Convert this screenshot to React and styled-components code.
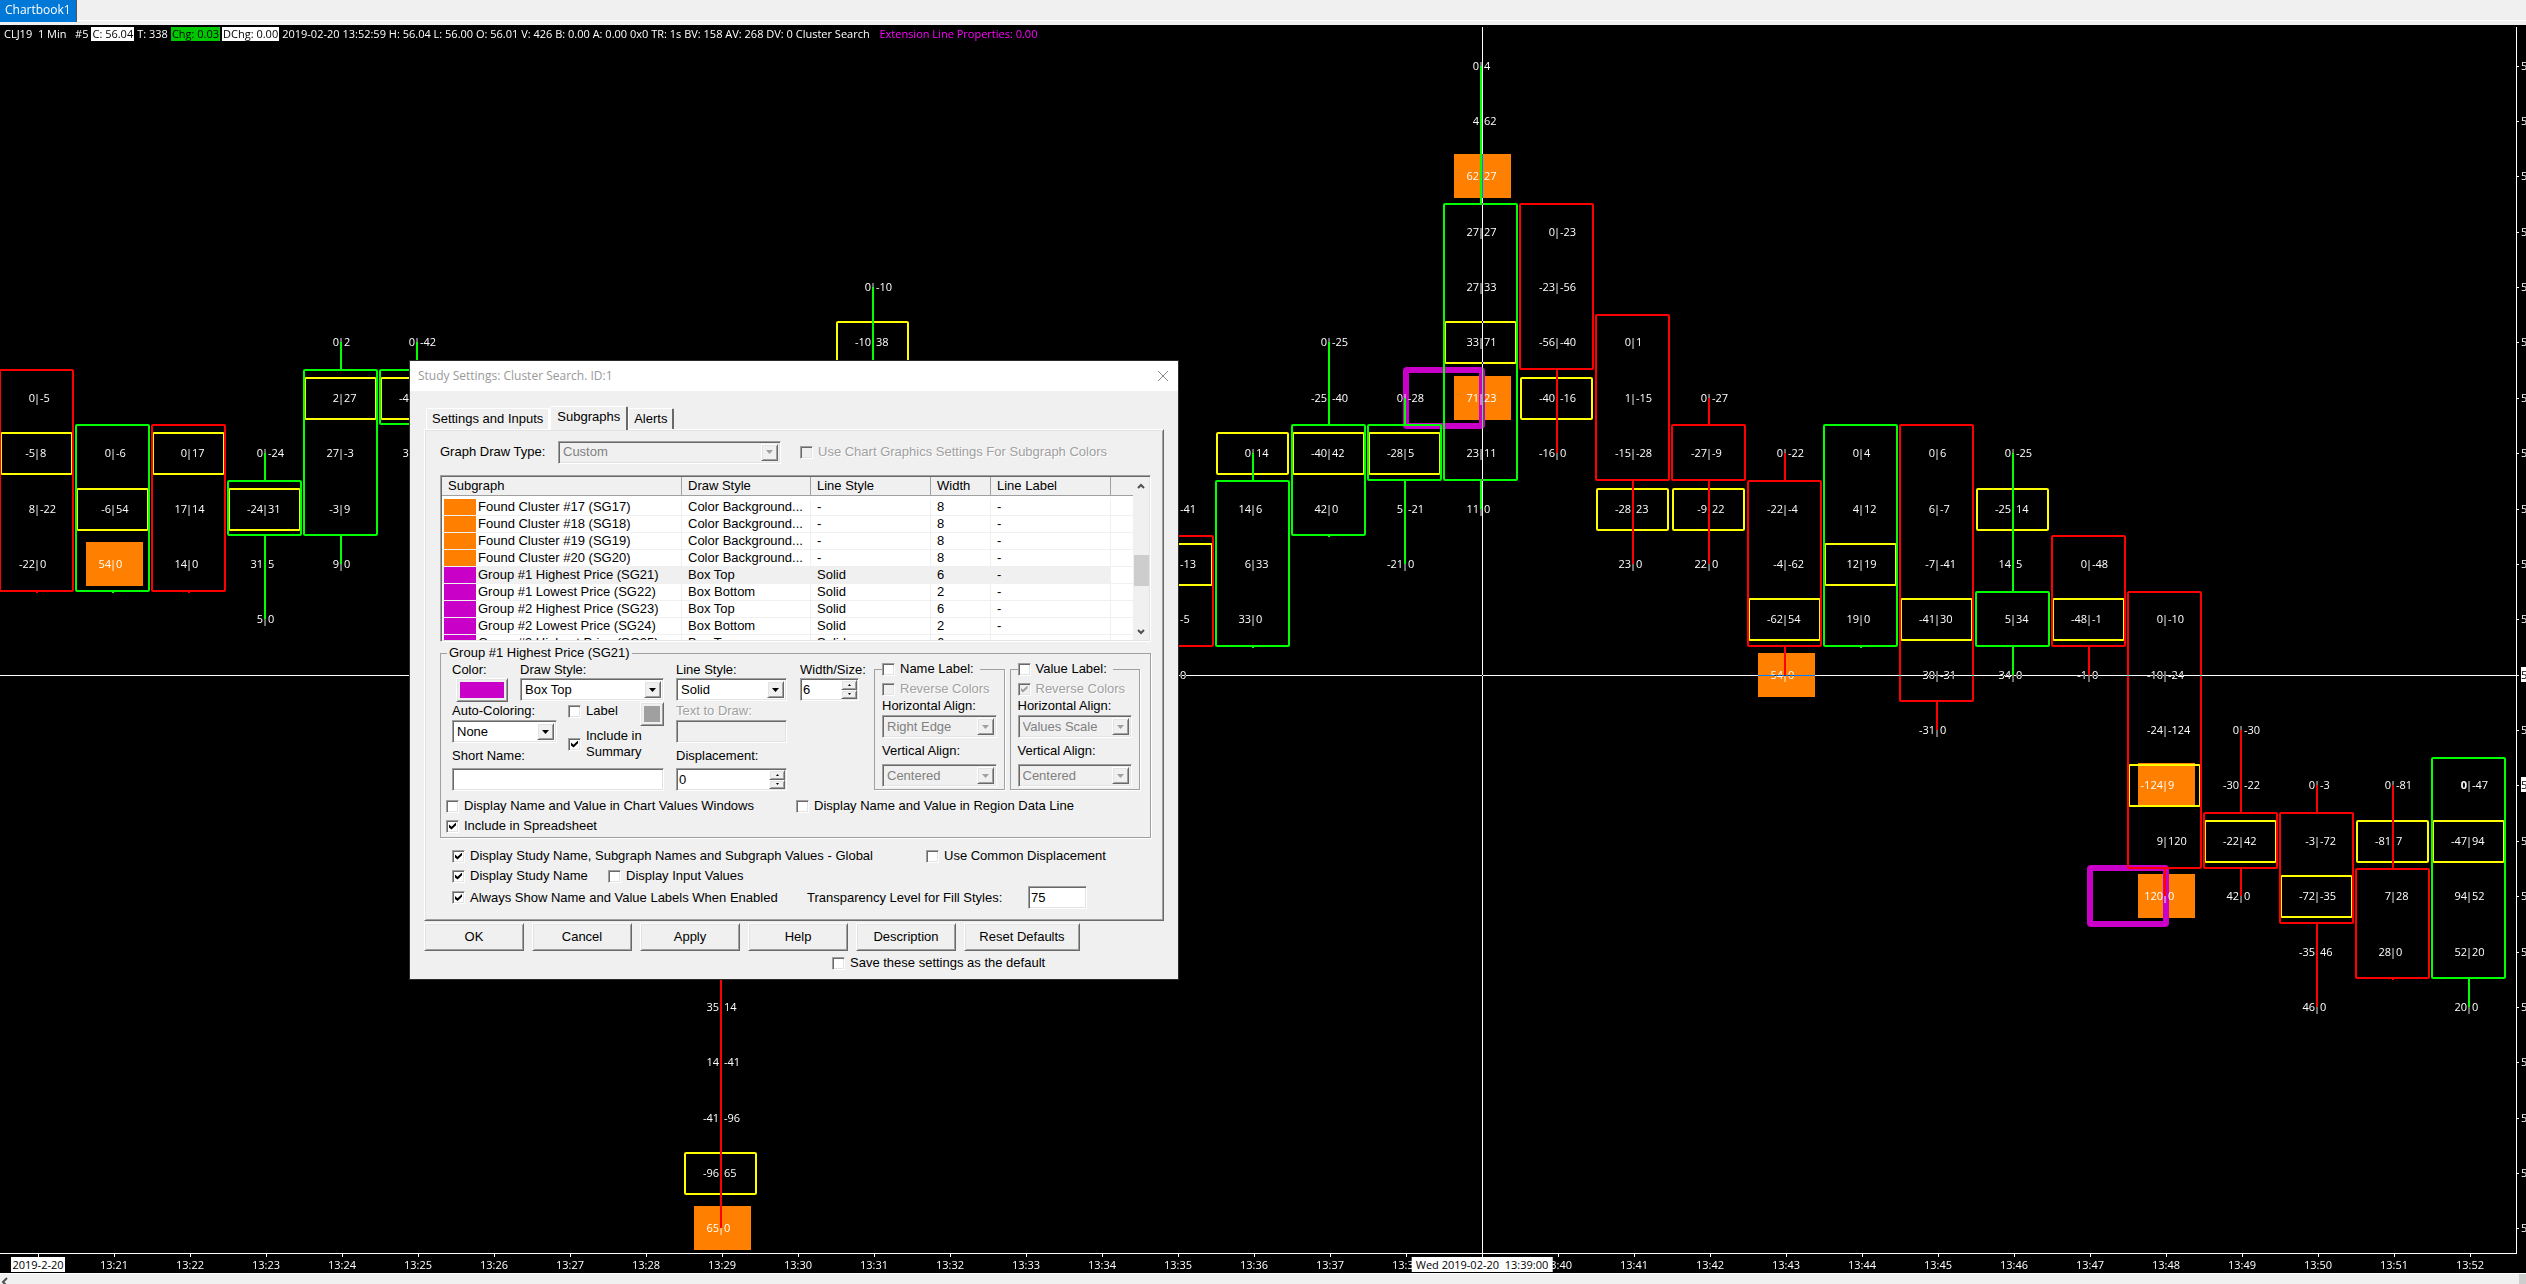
import React, { useState } from 'react';
import styled, { createGlobalStyle, css } from 'styled-components';

const GlobalStyle = createGlobalStyle`
  * {
    box-sizing: border-box;
  }
  body {
    margin: 0;
    background: #000;
  }
`;

const CHART_FONT = '"Open Sans", "Noto Sans", sans-serif';
const DIALOG_FONT = '"Liberation Sans", Arial, sans-serif';

const UP = '#00ff00';
const DOWN = '#ff0000';
const MAGENTA = '#c800c8';
const ORANGE = '#ff8000';

/* ---------- chart data ---------- */

// first = row of the first cell, body = first and last row of the candle body
const BARS = [
  { col: 0, color: DOWN, body: [6, 9], first: 6, cells: ['0|-5', '-5|8', '8|-22', '-22|0'], poc: 7 },
  { col: 1, color: UP, body: [7, 9], first: 7, cells: ['0|-6', '-6|54', '54|0'], poc: 8, clusters: [9] },
  { col: 2, color: DOWN, body: [7, 9], first: 7, cells: ['0|17', '17|14', '14|0'], poc: 7 },
  { col: 3, color: UP, body: [8, 8], first: 7, cells: ['0|-24', '-24|31', '31|5', '5|0'], poc: 8 },
  { col: 4, color: UP, body: [6, 8], first: 5, cells: ['0|2', '2|27', '27|-3', '-3|9', '9|0'], poc: 6 },
  { col: 5, color: UP, body: [6, 6], first: 5, cells: ['0|-42', '-42|30', '30|0'], poc: 6 },
  { col: 9, color: DOWN, body: [14, 15], first: 17, cells: ['35|14', '14|-41', '-41|-96', '-96|65', '65|0'], poc: 20, clusters: [21] },
  { col: 11, color: UP, body: [7, 8], first: 4, cells: ['0|-10', '-10|38'], poc: 5 },
  { col: 15, color: DOWN, body: [9, 10], first: 8, cells: ['0|-41', '-41|-13', '-13|-5', '-5|0'], poc: 9 },
  { col: 16, color: UP, body: [8, 10], first: 7, cells: ['0|14', '14|6', '6|33', '33|0'], poc: 7 },
  { col: 17, color: UP, body: [7, 8], first: 5, cells: ['0|-25', '-25|-40', '-40|42', '42|0'], poc: 7 },
  { col: 18, color: UP, body: [7, 7], first: 6, cells: ['0|-28', '-28|5', '5|-21', '-21|0'], poc: 7 },
  { col: 19, color: UP, body: [3, 7], first: 0, cells: ['0|4', '4|62', '62|27', '27|27', '27|33', '33|71', '71|23', '23|11', '11|0'], poc: 5, clusters: [2, 6] },
  { col: 20, color: DOWN, body: [3, 5], first: 3, cells: ['0|-23', '-23|-56', '-56|-40', '-40|-16', '-16|0'], poc: 6 },
  { col: 21, color: DOWN, body: [5, 7], first: 5, cells: ['0|1', '1|-15', '-15|-28', '-28|23', '23|0'], poc: 8 },
  { col: 22, color: DOWN, body: [7, 7], first: 6, cells: ['0|-27', '-27|-9', '-9|22', '22|0'], poc: 8 },
  { col: 23, color: DOWN, body: [8, 10], first: 7, cells: ['0|-22', '-22|-4', '-4|-62', '-62|54', '54|0'], poc: 10, clusters: [11] },
  { col: 24, color: UP, body: [7, 10], first: 7, cells: ['0|4', '4|12', '12|19', '19|0'], poc: 9 },
  { col: 25, color: DOWN, body: [7, 11], first: 7, cells: ['0|6', '6|-7', '-7|-41', '-41|30', '30|-31', '-31|0'], poc: 10 },
  { col: 26, color: UP, body: [10, 10], first: 7, cells: ['0|-25', '-25|14', '14|5', '5|34', '34|0'], poc: 8 },
  { col: 27, color: DOWN, body: [9, 10], first: 9, cells: ['0|-48', '-48|-1', '-1|0'], poc: 10 },
  { col: 28, color: DOWN, body: [10, 14], first: 10, cells: ['0|-10', '-10|-24', '-24|-124', '-124|9', '9|120', '120|0'], poc: 13, clusters: [13, 15] },
  { col: 29, color: DOWN, body: [14, 14], first: 12, cells: ['0|-30', '-30|-22', '-22|42', '42|0'], poc: 14 },
  { col: 30, color: DOWN, body: [14, 15], first: 13, cells: ['0|-3', '-3|-72', '-72|-35', '-35|46', '46|0'], poc: 15 },
  { col: 31, color: DOWN, body: [15, 16], first: 13, cells: ['0|-81', '-81|7', '7|28', '28|0'], poc: 14 },
  { col: 32, color: UP, body: [13, 16], first: 13, cells: ['0|-47', '-47|94', '94|52', '52|20', '20|0'], poc: 14, live: true },
];

const GROUPS = [
  { col: 19, row: 6 },
  { col: 28, row: 15 },
];

const TIMES = Array.from({ length: 32 }, (_, i) => `13:${21 + i}`);

const COL = 76;
const ROW = 55.38;
const rowY = (row) => Math.floor(21 + ROW * row);
const edgeY = (row) => Math.floor(21 + ROW * (row - 0.5));

/* ---------- page ---------- */

const Page = styled.div`
  display: flex;
  flex-direction: column;
  height: 100vh;
  overflow: hidden;
  position: relative;
  background: #000;
  font-family: ${CHART_FONT};
  font-size: 12px;
`;

const BookBar = styled.nav`
  display: flex;
  align-items: flex-start;
  flex: none;
  height: 25px;
  background: linear-gradient(#f0f0f0 20px, #fff 20px, #fff 21px, #f0f0f0 21px);
`;

const BookTab = styled.a`
  height: 22px;
  padding: 0 5px;
  border-right: 1px solid #555;
  background: #0078d7;
  color: #fff;
  line-height: 20px;
  text-decoration: none;
`;

const ChartArea = styled.main`
  flex: 1;
  min-height: 0;
  display: flex;
`;

const ChartColumn = styled.div`
  flex: 1;
  min-width: 0;
  display: flex;
  flex-direction: column;
`;

const InfoBar = styled.div`
  flex: none;
  display: flex;
  gap: 2px;
  height: 20px;
  padding: 2px 0 0 3px;
  color: #fff;
  font-size: 11px;
  line-height: 14px;
  white-space: pre;
`;

const InfoItem = styled.span`
  height: 14px;
  padding: 0 1px;
  background: ${({ $bg }) => $bg || 'transparent'};
  color: ${({ $color }) => $color || '#fff'};
`;

const Plot = styled.svg`
  display: block;
  flex: 1;
  width: 100%;
  min-height: 0;
  overflow: visible;
  font-family: ${CHART_FONT};
  font-size: 11px;
  fill: #fff;
`;

const Crosshair = styled.line`
  stroke: #fff;
  mix-blend-mode: difference;
`;

const TimeAxis = styled.div`
  flex: none;
  display: flex;
  height: 20px;
  border-top: 1px solid #fff;
  color: #fff;
  font-size: 11px;
`;

const TimeSlot = styled.div`
  flex: none;
  position: relative;
  display: flex;
  flex-direction: column;
  align-items: center;
  width: ${COL}px;
  line-height: 15px;

  &::before {
    content: '';
    width: 1px;
    height: 3px;
    background: #fff;
  }
`;

const DateMark = styled.span`
  padding: 0 1px;
  background: #fff;
  color: #000;
`;

const TimeBadge = styled.span`
  position: absolute;
  z-index: 1;
  top: 3px;
  left: 50%;
  transform: translateX(-50%);
  padding: 0 4px;
  background: #fff;
  color: #000;
  white-space: pre;
`;

const PriceAxis = styled.svg`
  display: block;
  flex: none;
  width: 10px;
  height: 100%;
  font-family: ${CHART_FONT};
  font-size: 11px;
`;

const ScrollStrip = styled.div`
  flex: none;
  display: flex;
  justify-content: space-between;
  height: 11px;
  border-top: 1px solid #fff;
  background: #f0f0f0;
`;

const ScrollCorner = styled.span`
  width: 7px;
  background: #cdcdcd;
`;

function Bar({ bar }) {
  const x = bar.col * COL;
  const mid = x + 37;
  const top = edgeY(bar.body[0]);
  const bottom = edgeY(bar.body[1] + 1) - 1;
  const high = Math.min(rowY(bar.first), top);
  const low = Math.max(rowY(bar.first + bar.cells.length - 1), bottom + 2);
  return (
    <g>
      <rect x={x + 1} y={rowY(bar.poc) - 20} width="71" height="41" rx="1" fill="none" stroke="#ffff00" strokeWidth="2" />
      <rect x={x} y={top} width="73" height={bottom - top} rx="1" fill="none" stroke={bar.color} strokeWidth="2" />
      {bar.cells.map((cell, i) => {
        const [bid, ask] = cell.split('|');
        const y = rowY(bar.first + i) + 4;
        return (
          <g key={i}>
            <text x={mid - 2} y={y} textAnchor="end" fontWeight={bar.live && i === 0 ? 'bold' : 'normal'}>{bid}</text>
            <text x={mid} y={y} textAnchor="middle">|</text>
            <text x={mid + 3} y={y}>{ask}</text>
          </g>
        );
      })}
      {high < top && <line x1={mid} x2={mid} y1={high} y2={top} stroke={bar.color} strokeWidth="2" />}
      <line x1={mid} x2={mid} y1={bottom} y2={low} stroke={bar.color} strokeWidth="2" />
    </g>
  );
}

function ClusterPlot() {
  return (
    <Plot>
      {BARS.map((bar) =>
        (bar.clusters || []).map((row) => (
          <rect key={`${bar.col}-${row}`} x={bar.col * COL + 10} y={rowY(row) - 22} width="57" height="44" fill={ORANGE} />
        ))
      )}
      {GROUPS.map(({ col, row }) => (
        <rect key={col} x={col * COL - 38} y={rowY(row) - 28} width="76" height="56" rx="1" fill="none" stroke={MAGENTA} strokeWidth="6" />
      ))}
      {BARS.map((bar) => (
        <Bar key={bar.col} bar={bar} />
      ))}
      <Crosshair x1="1482.5" x2="1482.5" y1="-18" y2="100%" />
      <Crosshair x1="0" x2="100%" y1={rowY(11) + 0.5} y2={rowY(11) + 0.5} />
    </Plot>
  );
}

function Prices() {
  return (
    <PriceAxis>
      <line x1="0.5" x2="0.5" y1="2" y2="1229" stroke="#fff" />
      {Array.from({ length: 22 }, (_, row) => {
        const y = rowY(row) + 20;
        const marked = row === 11 || row === 13;
        return (
          <g key={row}>
            <line x1="1" x2="3" y1={y + 0.5} y2={y + 0.5} stroke="#fff" />
            {marked && <rect x="5" y={y - 8} width="5" height="15" fill="#fff" />}
            <text x="5" y={y + 4} fill={marked ? '#000' : '#fff'}>5</text>
          </g>
        );
      })}
    </PriceAxis>
  );
}

/* ---------- dialog ---------- */

const raised = css`
  border: 1px solid;
  border-color: #fff #696969 #696969 #fff;
  box-shadow: inset 1px 1px 0 #e3e3e3, inset -1px -1px 0 #a0a0a0;
`;

const sunken = css`
  border: 1px solid;
  border-color: #a0a0a0 #fff #fff #a0a0a0;
  box-shadow: inset 1px 1px 0 #696969, inset -1px -1px 0 #e3e3e3;
`;

const etched = css`
  border: 1px solid #a0a0a0;
  box-shadow: 1px 1px 0 #fff;
`;

const Dialog = styled.section`
  position: absolute;
  z-index: 2;
  left: 409px;
  top: 360px;
  width: 770px;
  height: 620px;
  border: 1px solid #2b2b2b;
  background: #f0f0f0;
  color: #000;
  font-family: ${DIALOG_FONT};
  font-size: 13px;
  line-height: 16px;
`;

const TitleBar = styled.header`
  display: flex;
  align-items: center;
  justify-content: space-between;
  height: 30px;
  padding: 0 8px;
  background: #fff;
  color: #999;
  font-family: ${CHART_FONT};
  font-size: 12px;
`;

const CloseButton = styled.button`
  display: flex;
  padding: 1px;
  border: none;
  background: none;
`;

const DialogBody = styled.div`
  padding: 15px 14px 0;
`;

const TabList = styled.div`
  display: flex;
  align-items: flex-end;
  height: 23px;
  padding-left: 2px;
`;

const Tab = styled.button`
  height: ${({ $active }) => ($active ? 24 : 21)}px;
  margin-bottom: ${({ $active }) => ($active ? -1 : 0)}px;
  padding: 0 ${({ $active }) => ($active ? 6 : 5)}px ${({ $active }) => ($active ? 4 : 0)}px;
  position: relative;
  border: solid;
  border-width: 1px 2px 0 1px;
  border-color: #fff ${({ $last }) => ($last ? '#696969' : '#fff')} #fff #fff;
  border-radius: 2px 2px 0 0;
  background: #f0f0f0;
  color: #000;
  font: inherit;
`;

const Panel = styled.div`
  height: 492px;
  padding: 10px 12px 0 15px;
  ${raised}
`;

const TypeRow = styled.div`
  display: grid;
  grid-template-columns: 118px 223px 1fr;
  align-items: center;
  height: 24px;
  margin-bottom: 11px;

  > :last-child {
    margin-left: 19px;
  }
`;

const SelectFrame = styled.span`
  display: grid;
  width: ${({ $width }) => ($width ? `${$width}px` : '100%')};
  height: 23px;
  padding: 2px;
  background: ${({ $disabled }) => ($disabled ? '#f0f0f0' : '#fff')};
  ${sunken}
  font-size: 13px;

  > * {
    grid-area: 1 / 1;
  }
`;

const NativeSelect = styled.select`
  appearance: none;
  width: 100%;
  padding: 0 16px 0 2px;
  border: none;
  outline: none;
  background: transparent;
  color: #000;
  font: inherit;

  &:disabled {
    color: #808080;
    opacity: 1;
  }
`;

const SelectArrow = styled.span`
  display: flex;
  align-items: center;
  justify-content: center;
  justify-self: end;
  width: 17px;
  background: #f0f0f0;
  pointer-events: none;
  color: ${({ $disabled }) => ($disabled ? '#a0a0a0' : '#000')};
  ${raised}
`;

const CheckLabel = styled.label`
  display: flex;
  align-items: center;
  gap: 5px;
  color: ${({ $disabled }) => ($disabled ? '#a0a0a0' : '#000')};
  text-shadow: ${({ $disabled }) => ($disabled ? '1px 1px 0 #fff' : 'none')};
`;

const CheckInput = styled.input`
  appearance: none;
  flex: none;
  display: grid;
  place-items: center;
  width: 13px;
  height: 13px;
  margin: 0;
  background: ${({ disabled }) => (disabled ? '#f0f0f0' : '#fff')};
  ${sunken}

  &:checked::before {
    content: '';
    width: 7px;
    height: 7px;
    background: ${({ disabled }) => (disabled ? '#a0a0a0' : '#000')};
    clip-path: polygon(0 30%, 36% 62%, 100% 0, 100% 40%, 36% 100%, 0 70%);
  }
`;

const ListFrame = styled.div`
  display: flex;
  height: 167px;
  padding: 1px;
  background: #fff;
  ${sunken}
`;

const ListView = styled.div`
  flex: 1;
  min-width: 0;
  overflow: hidden;
`;

const SubgraphTable = styled.table`
  width: 100%;
  table-layout: fixed;
  border-collapse: separate;
  border-spacing: 0;

  th {
    height: 19px;
    padding: 0 0 0 6px;
    border-right: 1px solid #a0a0a0;
    border-bottom: 1px solid #a0a0a0;
    background: #f0f0f0;
    font-weight: normal;
    text-align: left;
  }
  th:last-child {
    border-right: none;
  }
  td {
    height: 17px;
    padding: 0 0 0 6px;
    border-right: 1px solid #f0f0f0;
    border-bottom: 1px solid #f0f0f0;
    white-space: nowrap;
    overflow: hidden;
  }
  td:first-child {
    padding-left: 2px;
  }
  td:last-child {
    border-right: none;
    background: #fff;
  }
  tbody::before {
    content: '';
    display: block;
    height: 3px;
  }
`;

const SubgraphRow = styled.tr`
  background: ${({ $selected }) => ($selected ? '#f0f0f0' : '#fff')};
`;

const NameCell = styled.span`
  display: flex;
  gap: 2px;
`;

const RowSwatch = styled.span`
  width: 32px;
  height: 16px;
  background: ${({ $color }) => $color};
`;

const ListScroll = styled.div`
  flex: none;
  display: flex;
  flex-direction: column;
  align-items: center;
  width: 16px;
  padding: 6px 0 5px;
  background: #f0f0f0;
`;

const ListThumb = styled.span`
  width: 15px;
  height: 31px;
  margin: 66px 0 auto;
  background: #cdcdcd;
`;

const Group = styled.fieldset`
  min-width: 0;
  margin: 3px 0 0;
  padding: 0 5px;
  ${etched}
`;

const GroupLegend = styled.legend`
  margin-left: 1px;
  padding: 0 2px;
  background: #f0f0f0;
`;

const GroupTop = styled.div`
  display: flex;
  padding-left: 6px;
  height: 130px;
`;

const FieldGrid = styled.div`
  display: grid;
  grid-template-columns: 60px 8px 48px 96px 12px 111px 13px 59px;
  grid-template-rows: 17px 24px 18px 24px 24px 23px;
  margin-right: 15px;
`;

const Field = styled.div`
  grid-row: ${({ $row }) => $row};
  grid-column: ${({ $col }) => $col};
  align-self: ${({ $align }) => $align || 'start'};
  justify-self: ${({ $justify }) => $justify || 'stretch'};
`;

const FieldLabel = styled.label`
  grid-row: ${({ $row }) => $row};
  grid-column: ${({ $col }) => $col};
  align-self: center;
  white-space: nowrap;
  color: ${({ $disabled }) => ($disabled ? '#a0a0a0' : '#000')};
  text-shadow: ${({ $disabled }) => ($disabled ? '1px 1px 0 #fff' : 'none')};
`;

const ColorButton = styled.button`
  display: block;
  width: ${({ $width }) => $width}px;
  height: 24px;
  padding: 3px;
  background: #f0f0f0;
  ${raised}

  &::before {
    content: '';
    display: block;
    height: 16px;
    background: ${({ $color }) => $color};
  }
`;

const TextInput = styled.input`
  display: block;
  width: ${({ $width }) => ($width ? `${$width}px` : '100%')};
  height: 23px;
  padding: 0 2px;
  outline: none;
  background: ${({ disabled }) => (disabled ? '#f0f0f0' : '#fff')};
  color: #000;
  font: inherit;
  ${sunken}
`;

const SpinFrame = styled.span`
  display: flex;
  height: 23px;
  padding: 1px;
  background: #fff;
  ${sunken}
`;

const SpinInput = styled.input`
  flex: 1;
  min-width: 0;
  width: 0;
  padding: 0 1px;
  border: none;
  outline: none;
  background: transparent;
  font: inherit;
`;

const SpinButtons = styled.span`
  display: flex;
  flex-direction: column;
  width: 16px;
`;

const SpinButton = styled.button`
  flex: 1;
  display: flex;
  align-items: center;
  justify-content: center;
  min-height: 0;
  padding: 0;
  background: #f0f0f0;
  ${raised}
`;

const LabelGroup = styled.fieldset`
  width: 131px;
  height: 129px;
  min-width: 0;
  margin: 0 5px 0 0;
  padding: 0 7px;
  ${etched}

  legend {
    padding: 0 6px 0 0;
    background: #f0f0f0;
  }
`;

const AlignLabel = styled.label`
  display: block;
  height: ${({ $tall }) => ($tall ? 26 : 18)}px;
  line-height: ${({ $tall }) => ($tall ? 26 : 18)}px;
`;

const ReverseRow = styled.div`
  margin-top: 4px;
`;

const OptionRow = styled.div`
  display: grid;
  grid-template-columns: ${({ $cols }) => $cols};
  align-items: center;
  height: 20px;
  white-space: nowrap;
`;

const Options = styled.div`
  padding: 5px 0 1px;
`;

const GlobalOptions = styled.div`
  padding: 8px 0 0 12px;
`;

const ButtonRow = styled.div`
  display: flex;
  gap: 8px;
  padding-top: 2px;
`;

const PushButton = styled.button`
  width: ${({ $wide }) => ($wide ? 116 : 100)}px;
  height: 28px;
  padding: 0;
  background: #f0f0f0;
  color: #000;
  font: inherit;
  ${raised}
`;

const SaveRow = styled.div`
  display: flex;
  padding: 4px 0 0 408px;
`;

const SUBGRAPHS = [
  ...[17, 18, 19, 20].map((n) => [`Found Cluster #${n} (SG${n})`, ORANGE, 'Color Background...', '-', 8]),
  ['Group #1 Highest Price (SG21)', MAGENTA, 'Box Top', 'Solid', 6],
  ['Group #1 Lowest Price (SG22)', MAGENTA, 'Box Bottom', 'Solid', 2],
  ['Group #2 Highest Price (SG23)', MAGENTA, 'Box Top', 'Solid', 6],
  ['Group #2 Lowest Price (SG24)', MAGENTA, 'Box Bottom', 'Solid', 2],
  ['Group #3 Highest Price (SG25)', MAGENTA, 'Box Top', 'Solid', 6],
];

function Chevron({ up }) {
  return (
    <svg width="8" height="6" viewBox="0 0 8 6">
      <path d={up ? 'M1 5L4 2L7 5' : 'M1 1L4 4L7 1'} fill="none" stroke="#505050" strokeWidth="2" />
    </svg>
  );
}

function Select({ id, value, width, disabled }) {
  return (
    <SelectFrame $width={width} $disabled={disabled}>
      <NativeSelect id={id} defaultValue={value} disabled={disabled}>
        <option>{value}</option>
      </NativeSelect>
      <SelectArrow $disabled={disabled}>
        <svg width="7" height="4" viewBox="0 0 7 4">
          <path d="M0 0H7L3.5 4Z" fill="currentColor" />
        </svg>
      </SelectArrow>
    </SelectFrame>
  );
}

function Check({ children, checked, disabled }) {
  return (
    <CheckLabel $disabled={disabled}>
      <CheckInput type="checkbox" defaultChecked={checked} disabled={disabled} />
      <span>{children}</span>
    </CheckLabel>
  );
}

function Spinner({ id, start }) {
  const [value, setValue] = useState(start);
  return (
    <SpinFrame>
      <SpinInput id={id} value={value} onChange={(e) => setValue(e.target.value)} />
      <SpinButtons>
        <SpinButton type="button" aria-label="Increase" onClick={() => setValue(Number(value) + 1)}>
          <svg width="3" height="2"><path d="M0 2L1.5 0L3 2Z" /></svg>
        </SpinButton>
        <SpinButton type="button" aria-label="Decrease" onClick={() => setValue(Number(value) - 1)}>
          <svg width="3" height="2"><path d="M0 0L1.5 2L3 0Z" /></svg>
        </SpinButton>
      </SpinButtons>
    </SpinFrame>
  );
}

function LabelSettings({ name, title, horizontal, reversed }) {
  return (
    <LabelGroup>
      <legend><Check>{title}</Check></legend>
      <ReverseRow>
        <Check disabled checked={reversed}>Reverse Colors</Check>
      </ReverseRow>
      <AlignLabel htmlFor={`${name}-h`}>Horizontal Align:</AlignLabel>
      <Select id={`${name}-h`} value={horizontal} disabled />
      <AlignLabel $tall htmlFor={`${name}-v`}>Vertical Align:</AlignLabel>
      <Select id={`${name}-v`} value="Centered" disabled />
    </LabelGroup>
  );
}

function StudySettings() {
  const [selected, setSelected] = useState(4);
  return (
    <Dialog role="dialog" aria-labelledby="dialog-title">
      <TitleBar>
        <span id="dialog-title">Study Settings: Cluster Search. ID:1</span>
        <CloseButton type="button" aria-label="Close">
          <svg width="12" height="12" viewBox="0 0 12 12">
            <path d="M1 1L11 11M11 1L1 11" stroke="#888" fill="none" />
          </svg>
        </CloseButton>
      </TitleBar>
      <DialogBody>
        <TabList role="tablist">
          <Tab role="tab">Settings and Inputs</Tab>
          <Tab role="tab" $active $last>Subgraphs</Tab>
          <Tab role="tab" $last>Alerts</Tab>
        </TabList>
        <Panel>
          <TypeRow>
            <label htmlFor="draw-type">Graph Draw Type:</label>
            <Select id="draw-type" value="Custom" disabled />
            <Check disabled>Use Chart Graphics Settings For Subgraph Colors</Check>
          </TypeRow>

          <ListFrame>
            <ListView>
              <SubgraphTable>
                <colgroup>
                  <col width="240" />
                  <col width="129" />
                  <col width="120" />
                  <col width="60" />
                  <col width="120" />
                  <col />
                </colgroup>
                <thead>
                  <tr>
                    <th>Subgraph</th>
                    <th>Draw Style</th>
                    <th>Line Style</th>
                    <th>Width</th>
                    <th>Line Label</th>
                    <th />
                  </tr>
                </thead>
                <tbody>
                  {SUBGRAPHS.map(([name, color, draw, line, width], i) => (
                    <SubgraphRow key={name} $selected={i === selected} onClick={() => setSelected(i)}>
                      <td><NameCell><RowSwatch $color={color} />{name}</NameCell></td>
                      <td>{draw}</td>
                      <td>{line}</td>
                      <td>{width}</td>
                      <td>-</td>
                      <td />
                    </SubgraphRow>
                  ))}
                </tbody>
              </SubgraphTable>
            </ListView>
            <ListScroll>
              <Chevron up />
              <ListThumb />
              <Chevron />
            </ListScroll>
          </ListFrame>

          <Group>
            <GroupLegend>Group #1 Highest Price (SG21)</GroupLegend>
            <GroupTop>
              <FieldGrid>
                <FieldLabel $row="1" $col="1" htmlFor="color">Color:</FieldLabel>
                <Field $row="2" $col="1" $justify="center">
                  <ColorButton id="color" type="button" $width={52} $color={MAGENTA} />
                </Field>
                <FieldLabel $row="1" $col="3 / 5" htmlFor="draw-style">Draw Style:</FieldLabel>
                <Field $row="2" $col="3 / 5"><Select id="draw-style" value="Box Top" /></Field>
                <FieldLabel $row="1" $col="6" htmlFor="line-style">Line Style:</FieldLabel>
                <Field $row="2" $col="6"><Select id="line-style" value="Solid" /></Field>
                <FieldLabel $row="1" $col="8" htmlFor="width">Width/Size:</FieldLabel>
                <Field $row="2" $col="8"><Spinner id="width" start="6" /></Field>

                <FieldLabel $row="3" $col="1 / 4" htmlFor="auto-color">Auto-Coloring:</FieldLabel>
                <Field $row="4" $col="1 / 4"><Select id="auto-color" value="None" width={105} /></Field>
                <Field $row="3" $col="4" $align="center"><Check>Label</Check></Field>
                <Field $row="3 / 5" $col="4" $justify="end">
                  <ColorButton type="button" aria-label="Label color" $width={24} $color="#a0a0a0" />
                </Field>
                <Field $row="4 / 6" $col="4" $align="center">
                  <Check checked>Include in<br />Summary</Check>
                </Field>
                <FieldLabel $row="3" $col="6" $disabled htmlFor="draw-text">Text to Draw:</FieldLabel>
                <Field $row="4" $col="6"><TextInput id="draw-text" disabled /></Field>

                <FieldLabel $row="5" $col="1 / 4" htmlFor="short-name">Short Name:</FieldLabel>
                <Field $row="6" $col="1 / 5"><TextInput id="short-name" /></Field>
                <FieldLabel $row="5" $col="6" htmlFor="displacement">Displacement:</FieldLabel>
                <Field $row="6" $col="6"><Spinner id="displacement" start="0" /></Field>
              </FieldGrid>
              <LabelSettings name="name" title="Name Label:" horizontal="Right Edge" />
              <LabelSettings name="value" title="Value Label:" horizontal="Values Scale" reversed />
            </GroupTop>
            <Options>
              <OptionRow $cols="350px 1fr">
                <Check>Display Name and Value in Chart Values Windows</Check>
                <Check>Display Name and Value in Region Data Line</Check>
              </OptionRow>
              <OptionRow $cols="1fr">
                <Check checked>Include in Spreadsheet</Check>
              </OptionRow>
            </Options>
          </Group>

          <GlobalOptions>
            <OptionRow $cols="474px 1fr">
              <Check checked>Display Study Name, Subgraph Names and Subgraph Values - Global</Check>
              <Check>Use Common Displacement</Check>
            </OptionRow>
            <OptionRow $cols="156px 1fr">
              <Check checked>Display Study Name</Check>
              <Check>Display Input Values</Check>
            </OptionRow>
            <OptionRow $cols="355px 221px 59px">
              <Check checked>Always Show Name and Value Labels When Enabled</Check>
              <label htmlFor="transparency">Transparency Level for Fill Styles:</label>
              <TextInput id="transparency" defaultValue="75" $width={59} />
            </OptionRow>
          </GlobalOptions>
        </Panel>
        <ButtonRow>
          <PushButton type="button">OK</PushButton>
          <PushButton type="button">Cancel</PushButton>
          <PushButton type="button">Apply</PushButton>
          <PushButton type="button">Help</PushButton>
          <PushButton type="button">Description</PushButton>
          <PushButton type="button" $wide>Reset Defaults</PushButton>
        </ButtonRow>
        <SaveRow>
          <Check>Save these settings as the default</Check>
        </SaveRow>
      </DialogBody>
    </Dialog>
  );
}

const App = () => (
  <Page>
    <GlobalStyle />
    <BookBar>
      <BookTab href="#chartbook1">Chartbook1</BookTab>
    </BookBar>
    <ChartArea>
      <ChartColumn>
        <InfoBar>
          <InfoItem>{'CLJ19  1 Min   #5'}</InfoItem>
          <InfoItem $bg="#fff" $color="#000">C: 56.04</InfoItem>
          <InfoItem>T: 338</InfoItem>
          <InfoItem $bg="#00c800" $color="#000">Chg: 0.03</InfoItem>
          <InfoItem $bg="#fff" $color="#000">DChg: 0.00</InfoItem>
          <InfoItem>
            2019-02-20 13:52:59 H: 56.04 L: 56.00 O: 56.01 V: 426 B: 0.00 A: 0.00 0x0 TR: 1s BV: 158 AV: 268 DV: 0 Cluster Search
          </InfoItem>
          <InfoItem $color="#ff00ff">{'  Extension Line Properties: 0.00'}</InfoItem>
        </InfoBar>
        <ClusterPlot />
        <TimeAxis>
          <TimeSlot><DateMark>2019-2-20</DateMark></TimeSlot>
          {TIMES.map((time) => (
            <TimeSlot key={time}>
              {time === '13:39' ? <TimeBadge>{'Wed 2019-02-20  13:39:00'}</TimeBadge> : time}
            </TimeSlot>
          ))}
        </TimeAxis>
      </ChartColumn>
      <Prices />
    </ChartArea>
    <ScrollStrip>
      <svg width="12" height="10" viewBox="0 0 12 10">
        <path d="M7 4L3 8L7 12" fill="none" stroke="#505050" strokeWidth="2" />
      </svg>
      <ScrollCorner />
    </ScrollStrip>
    <StudySettings />
  </Page>
);

export default App;
